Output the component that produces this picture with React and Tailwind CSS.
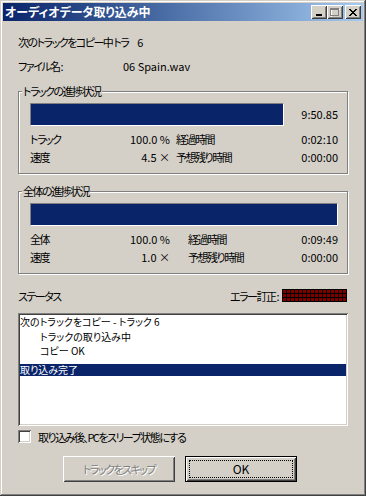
import React from 'react';

const face = "font-['Noto_Sans_CJK_JP','Noto_Sans_CJK_SC',sans-serif] [font-feature-settings:'palt']";

const raised =
  'shadow-[inset_1px_1px_#ffffff,inset_-1px_-1px_#404040,inset_2px_2px_#d4d0c8,inset_-2px_-2px_#808080]';
const sunken =
  'shadow-[inset_1px_1px_#808080,inset_-1px_-1px_#ffffff,inset_2px_2px_#404040,inset_-2px_-2px_#d4d0c8]';

function CapButton({ children, className = '' }) {
  return (
    <div className={`w-[16px] h-[14px] bg-[#d4d0c8] flex items-center justify-center ${raised} ${className}`}>
      {children}
    </div>
  );
}

function Group({ label, children }) {
  return (
    <div className="relative border border-[#808080] shadow-[inset_1px_1px_#ffffff,1px_1px_#ffffff] pt-[11px] pl-[11px] pr-[9px] pb-[7px]">
      <span className="absolute -top-[7px] left-[3px] bg-[#d4d0c8] px-[1px] leading-[12px]">{label}</span>
      {children}
    </div>
  );
}

function Bar({ className = '' }) {
  return (
    <div className={`h-[23px] border border-t-[#808080] border-l-[#808080] border-b-white border-r-white bg-[#0a246a] ${className}`} />
  );
}

function StatRow({ label, value, label2, value2, gap }) {
  return (
    <div className="flex h-[18px] items-center leading-[12px]">
      <div className="w-[140px] flex justify-between">
        <span>{label}</span>
        <span className="tracking-normal">{value}</span>
      </div>
      <div className={`flex-1 flex justify-between ${gap}`}>
        <span>{label2}</span>
        <span className="tracking-normal">{value2}</span>
      </div>
    </div>
  );
}

function ErrorGrid() {
  const cells = Array.from({ length: 48 });
  return (
    <div className="grid grid-cols-[repeat(16,3px)] gap-[1px] bg-black p-[1px]">
      {cells.map((_, i) => (
        <div key={i} className="w-[3px] h-[3px] bg-[#800000]" />
      ))}
    </div>
  );
}

export default function App() {
  return (
    <div
      className={`w-[366px] h-[496px] bg-[#d4d0c8] p-[3px] flex flex-col text-[11px] tracking-[-1.5px] text-black ${face} shadow-[inset_-1px_-1px_#404040,inset_1px_1px_#d4d0c8,inset_-2px_-2px_#808080,inset_2px_2px_#ffffff]`}
    >
      {/* Title bar */}
      <div className="h-[18px] bg-linear-to-r from-[#0a246a] to-[#a6caf0] flex items-center pl-[2px] pr-[2px] tracking-normal">
        <span className="flex-1 text-white font-bold text-[12px] leading-[14px]">オーディオデータ取り込み中</span>
        <CapButton>
          <svg width="8" height="8" viewBox="0 0 8 8" shapeRendering="crispEdges">
            <rect x="1" y="6" width="6" height="2" fill="#000" />
          </svg>
        </CapButton>
        <CapButton>
          <svg width="10" height="9" viewBox="0 0 10 9" shapeRendering="crispEdges">
            <rect x="1" y="1" width="9" height="8" fill="none" stroke="#fff" strokeWidth="1" />
            <rect x="0.5" y="0.5" width="8" height="7" fill="none" stroke="#808080" strokeWidth="1" />
            <rect x="0" y="0" width="9" height="2" fill="#808080" />
          </svg>
        </CapButton>
        <CapButton className="ml-[2px]">
          <svg width="8" height="7" viewBox="0 0 8 7" shapeRendering="crispEdges">
            <path d="M0 0h2v1h-2zM6 0h2v1h-2zM1 1h2v1h-2zM5 1h2v1h-2zM2 2h4v1h-4zM3 3h2v1h-2zM2 4h4v1h-4zM1 5h2v1h-2zM5 5h2v1h-2zM0 6h2v1h-2zM6 6h2v1h-2z" fill="#000" />
          </svg>
        </CapButton>
      </div>

      {/* Body */}
      <div className="flex flex-col pl-[15px] pr-[15px] pt-[15px]">
        <div className="h-[12px] leading-[12px] flex">
          <span>次のトラックをコピー中 トラ</span>
          <span className="ml-[9px] tracking-normal">6</span>
        </div>
        <div className="h-[12px] leading-[12px] flex mt-[12px]">
          <span className="w-[105px]">ファイル名 :</span>
          <span className="tracking-normal">06 Spain.wav</span>
        </div>

        <div className="mt-[19px]">
          <Group label="トラックの進捗状況">
            <div className="flex items-center">
              <Bar className="w-[254px]" />
              <span className="flex-1 text-right tracking-normal">9:50.85</span>
            </div>
            <div className="mt-[4px]">
              <StatRow label="トラック" value="100.0 %" label2="経過時間" value2="0:02:10" gap="ml-[6px]" />
              <StatRow label="速度" value="4.5 ×" label2="予想残り時間" value2="0:00:00" gap="ml-[6px]" />
            </div>
          </Group>
        </div>

        <div className="mt-[17px]">
          <Group label="全体の進捗状況">
            <Bar className="w-full" />
            <div className="mt-[4px]">
              <StatRow label="全体" value="100.0 %" label2="経過時間" value2="0:09:49" gap="ml-[18px]" />
              <StatRow label="速度" value="1.0 ×" label2="予想残り時間" value2="0:00:00" gap="ml-[18px]" />
            </div>
          </Group>
        </div>

        <div className="mt-[15px] flex items-end h-[13px]">
          <span className="flex-1 leading-[12px]">ステータス</span>
          <span className="leading-[12px] mr-[4px]">エラー訂正 :</span>
          <div className="mr-[1px]">
            <ErrorGrid />
          </div>
        </div>

        <div className={`mt-[11px] h-[113px] bg-white p-[2px] tracking-normal ${sunken}`}>
          <div className="text-[10px]">
            <div className="h-[14.5px] leading-[14.5px]">次のトラックをコピー - トラック 6</div>
            <div className="h-[14.5px] leading-[14.5px] pl-[20px]">トラックの取り込み中</div>
            <div className="h-[14.5px] leading-[14.5px] pl-[20px]">コピー OK</div>
            <div className="h-[5.5px]" />
            <div className="h-[12px] leading-[12px] bg-[#0a246a] text-white">取り込み完了</div>
          </div>
        </div>

        <div className="mt-[4px] flex items-center">
          <div className={`w-[13px] h-[13px] bg-white ${sunken}`} />
          <span className="ml-[7px] leading-[12px]">取り込み後、PCをスリープ状態にする</span>
        </div>

        <div className="mt-[13px] ml-[45px] flex gap-[10px]">
          <div className={`w-[112px] h-[26px] flex items-center justify-center text-[#808080] [text-shadow:1px_1px_0_#ffffff] ${raised}`}>
            トラックをスキップ
          </div>
          <div className="w-[112px] h-[26px] border border-black flex">
            <div className={`flex-1 flex p-[3px] ${raised}`}>
              <div className="flex-1 border border-dotted border-black flex items-center justify-center text-[12px] tracking-normal">
                OK
              </div>
            </div>
          </div>
        </div>
      </div>
    </div>
  );
}
